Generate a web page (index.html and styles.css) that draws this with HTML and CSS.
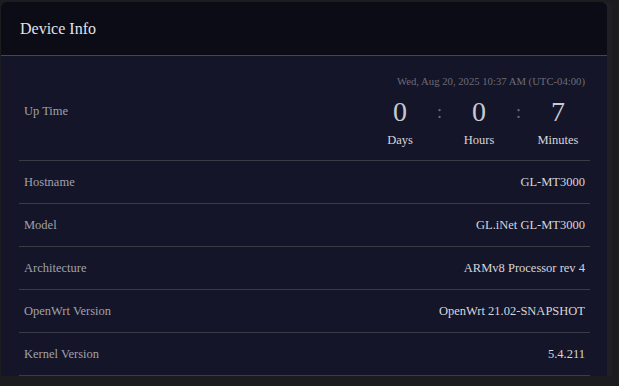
FILE: index.html
```html
<!DOCTYPE html>
<html lang="en">
<head>
  <meta charset="UTF-8" />
  <meta name="viewport" content="width=device-width, initial-scale=1.0" />
  <title>Device Info</title>
  <link rel="stylesheet" href="styles.css">
</head>
<body>
  <div class="card">
    <header class="card-head">
      <h2 class="title">Device Info</h2>
    </header>

    <div class="card-body">
      <div class="row uptime">
        <span class="label">Up Time</span>
        <div class="uptime-box">
          <div class="clock">Wed, Aug 20, 2025 10:37 AM (UTC-04:00)</div>
          <div class="timer">
            <div class="unit"><span class="num">0</span><span class="unit-name">Days</span></div>
            <span class="colon">:</span>
            <div class="unit"><span class="num">0</span><span class="unit-name">Hours</span></div>
            <span class="colon">:</span>
            <div class="unit"><span class="num">7</span><span class="unit-name">Minutes</span></div>
          </div>
        </div>
      </div>
      <div class="row">
        <span class="label">Hostname</span>
        <span class="value">GL-MT3000</span>
      </div>
      <div class="row">
        <span class="label">Model</span>
        <span class="value">GL.iNet GL-MT3000</span>
      </div>
      <div class="row">
        <span class="label">Architecture</span>
        <span class="value">ARMv8 Processor rev 4</span>
      </div>
      <div class="row">
        <span class="label">OpenWrt Version</span>
        <span class="value">OpenWrt 21.02-SNAPSHOT</span>
      </div>
      <div class="row">
        <span class="label">Kernel Version</span>
        <span class="value">5.4.211</span>
      </div>
    </div>
  </div>
</body>
</html>
```

FILE: styles.css
```css
body {
  margin: 0;
  padding: 2px 0 0 1px;
  font-family: "Liberation Serif", "Times New Roman", serif;
  background-color: #1c1c20;
  color: #d6d6dc;
  overflow: hidden;
}
.card {
  width: 606px;
  background-color: #141528;
  border-radius: 6px 6px 0 0;
  box-shadow: 5px 0 0 #202024;
  overflow: hidden;
}
.card-head {
  height: 53px;
  padding: 0 19px;
  display: flex;
  align-items: center;
  background-color: #0b0c16;
  border-bottom: 1px solid #45464f;
}
.title {
  margin: 0;
  font-size: 16px;
  font-weight: normal;
  color: #e2e2e8;
}
.card-body {
  padding: 0 17px 0 18px;
}
.row {
  height: 42px;
  padding: 0 5px;
  display: flex;
  align-items: center;
  justify-content: space-between;
  border-bottom: 1px solid #3a3b44;
  font-size: 12.5px;
}
.label {
  color: #a0a0aa;
}
.value {
  color: #d6d6dc;
}
.row.uptime {
  height: auto;
  padding-top: 18px;
  padding-bottom: 12px;
}
.uptime-box {
  display: flex;
  flex-direction: column;
  align-items: flex-end;
}
.clock {
  font-size: 10.7px;
  line-height: 14px;
  color: #6c6c77;
  margin-bottom: 8px;
}
.timer {
  display: flex;
}
.unit {
  width: 54px;
  display: flex;
  flex-direction: column;
  align-items: center;
}
.num {
  font-size: 28px;
  line-height: 32px;
  color: #c9c9d1;
}
.unit-name {
  margin-top: 4px;
  font-size: 12.5px;
  line-height: 16px;
  color: #d6d6dc;
}
.colon {
  width: 25px;
  text-align: center;
  font-size: 18px;
  line-height: 32px;
  color: #6c6c77;
}
```
